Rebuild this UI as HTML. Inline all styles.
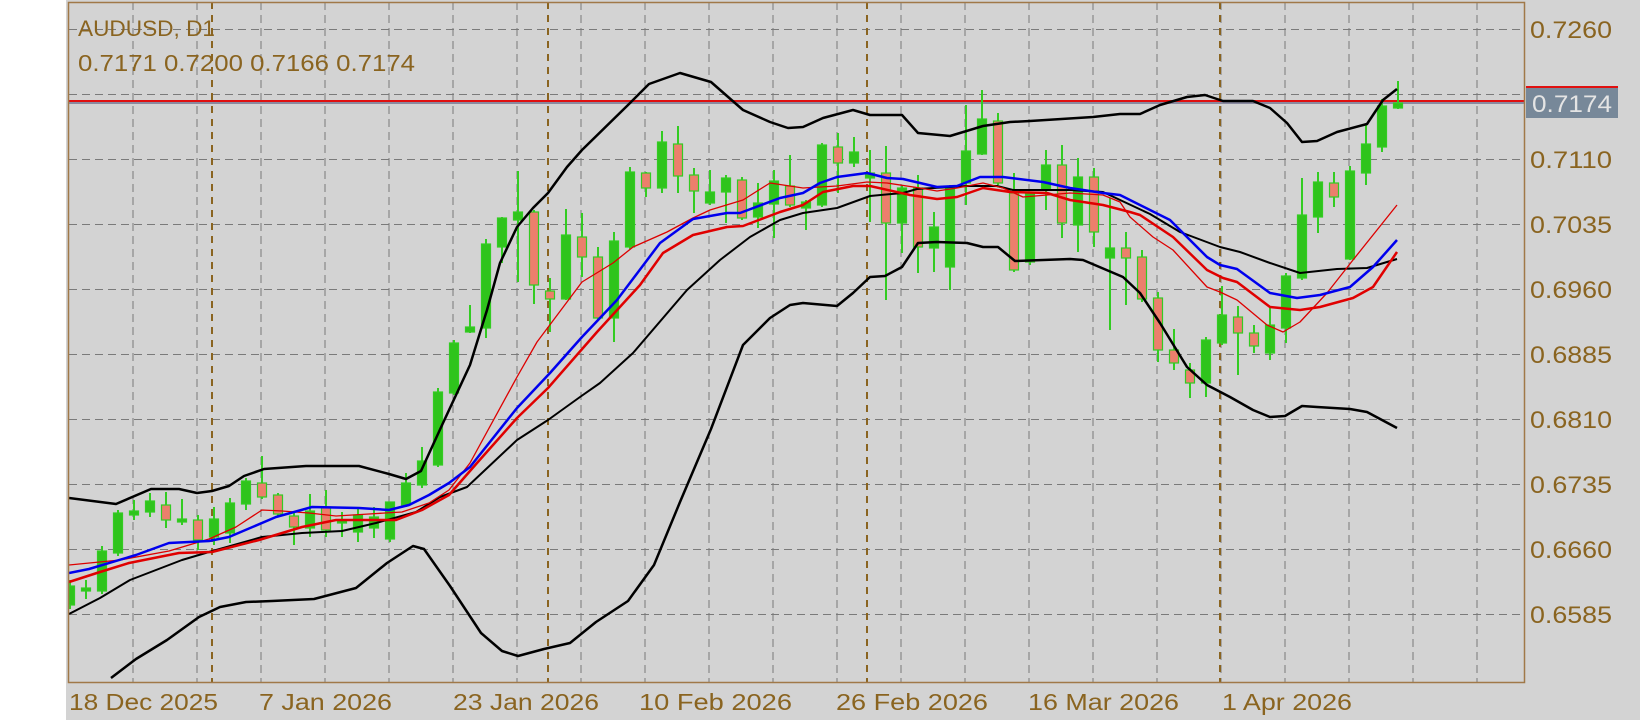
<!DOCTYPE html>
<html><head><meta charset="utf-8"><style>
html,body{margin:0;padding:0;background:#fff;width:1640px;height:720px;overflow:hidden}
svg{display:block}
text{font-family:"Liberation Sans",sans-serif;fill:#8a6420}
</style></head><body>
<svg width="1640" height="720" viewBox="0 0 1640 720" xmlns="http://www.w3.org/2000/svg">
<defs><clipPath id="c"><rect x="69" y="2" width="1455" height="680"/></clipPath></defs>
<rect x="66" y="0" width="1574" height="720" fill="#d3d3d3"/>
<rect x="0" y="0" width="66" height="682" fill="#fff"/>
<g stroke="#7a7a7a" stroke-width="1" stroke-dasharray="8,5" fill="none">
<path d="M133 2V682M197 2V682M261 2V682M325 2V682M389 2V682M453 2V682M517 2V682M581 2V682M645 2V682M709 2V682M773 2V682M837 2V682M901 2V682M965 2V682M1029 2V682M1093 2V682M1157 2V682M1221 2V682M1285 2V682M1349 2V682M1413 2V682M1477 2V682"/>
<path d="M69 29.5H1524M69 94.5H1524M69 159.5H1524M69 224.5H1524M69 289.5H1524M69 354.5H1524M69 419.5H1524M69 484.5H1524M69 549.5H1524M69 614.5H1524"/>
</g>
<g stroke="#8a6420" stroke-width="2" stroke-dasharray="7,6" fill="none">
<path d="M212 2V682M548 2V682M867 2V682M1220 2V682"/>
</g>
<line x1="69" y1="103" x2="1524" y2="103" stroke="#8a8aa0" stroke-width="2"/>
<line x1="69" y1="101" x2="1524" y2="101" stroke="#e01010" stroke-width="2"/>
<g clip-path="url(#c)">
<g id="candles" stroke="#33cc22">
</g>
</g>
<g clip-path="url(#c)" fill="none" stroke-linejoin="round">
<polyline stroke="#000" stroke-width="2.5" points="69,498 116,504 151,489 179,489 197,493 212,491 229,486 244,476 264,469 306,466 359,466 389,474 406,479 421,471 443,423 470,365 487,310 500,263 517,227 533,208 548,193 567,167 582,150 628,105 649,84 680,73 711,82 743,110 770,122 788,128 803,127 823,118 853,110 870,115 902,115 918,133 950,136 983,126 1010,122 1030,121 1093,117 1120,114 1140,114 1160,105 1187,97 1205,95 1223,101 1253,101 1270,108 1287,123 1302,142 1317,141 1337,132 1367,124 1383,100 1397,89"/>
<polyline stroke="#000" stroke-width="2.5" points="111,678 136,659 167,640 199,617 220,607 246,602 272,601 314,599 356,588 387,563 413,546 424,549 450,586 481,633 502,651 518,656 544,649 570,643 596,622 628,601 654,565 680,502 711,429 743,345 770,318 790,305 803,303 837,306 853,293 870,277 885,276 902,267 918,243 937,242 967,243 983,247 998,247 1015,261 1070,259 1083,260 1123,277 1140,293 1160,323 1187,367 1207,385 1230,397 1253,410 1270,417 1285,416 1302,406 1317,407 1350,409 1367,412 1397,428"/>
<polyline stroke="#000" stroke-width="2" points="69,614 100,598 130,580 156,570 182,560 209,552 262,537 302,533 342,531 376,523 416,512 440,497 467,487 517,440 548,420 580,397 600,383 633,353 687,290 720,260 750,237 780,220 803,213 837,208 870,196 903,193 917,189 967,186 997,186 1013,190 1070,190 1103,192 1150,214 1180,232 1220,247 1240,252 1270,263 1300,273 1337,269 1367,268 1397,259"/>
<polyline stroke="#dd0000" stroke-width="1.3" points="69,565 120,560 169,551 209,539 236,527 262,510 282,511 309,513 336,516 369,514 402,512 429,503 449,490 470,463 517,377 537,342 582,282 613,263 633,247 667,232 693,218 710,210 743,200 770,183 803,188 837,186 867,182 887,183 920,188 937,191 957,188 983,183 1003,188 1023,197 1047,195 1070,193 1103,195 1120,202 1130,217 1153,237 1173,250 1207,287 1220,292 1237,300 1267,325 1283,332 1300,322 1327,293 1353,260 1397,205"/>
<polyline stroke="#e00000" stroke-width="2.5" points="69,582 100,572 129,563 179,553 212,552 259,540 302,527 336,520 369,520 396,520 422,510 449,495 477,463 517,418 548,388 597,332 640,285 663,253 693,235 727,227 743,226 780,212 803,205 823,192 853,186 870,186 910,195 937,199 957,197 983,188 1010,192 1047,193 1070,200 1103,205 1130,212 1140,215 1173,237 1207,270 1223,278 1237,282 1270,307 1300,310 1320,307 1353,298 1373,287 1397,252"/>
<polyline stroke="#0000ee" stroke-width="2.5" points="69,573 89,569 136,555 169,543 209,541 229,537 276,517 312,507 359,508 389,510 409,505 429,495 449,483 470,467 517,408 550,373 582,337 617,300 660,243 693,219 727,213 740,213 780,198 803,193 820,183 837,177 867,173 887,178 903,179 937,187 957,186 980,177 1003,177 1043,182 1070,188 1103,193 1120,195 1170,220 1207,257 1220,265 1237,269 1270,293 1297,298 1320,295 1350,287 1373,267 1397,240"/>
</g>
<rect x="68.5" y="2.5" width="1456" height="680" fill="none" stroke="#a07848" stroke-width="1.5"/>
<text x="78" y="36" font-size="22" textLength="137" lengthAdjust="spacingAndGlyphs">AUDUSD, D1</text>
<text x="78" y="71" font-size="23" textLength="337" lengthAdjust="spacingAndGlyphs">0.7171 0.7200 0.7166 0.7174</text>
<g font-size="24">
<text x="1530" y="38" textLength="82" lengthAdjust="spacingAndGlyphs">0.7260</text>
<text x="1530" y="168" textLength="82" lengthAdjust="spacingAndGlyphs">0.7110</text>
<text x="1530" y="233" textLength="82" lengthAdjust="spacingAndGlyphs">0.7035</text>
<text x="1530" y="298" textLength="82" lengthAdjust="spacingAndGlyphs">0.6960</text>
<text x="1530" y="363" textLength="82" lengthAdjust="spacingAndGlyphs">0.6885</text>
<text x="1530" y="428" textLength="82" lengthAdjust="spacingAndGlyphs">0.6810</text>
<text x="1530" y="493" textLength="82" lengthAdjust="spacingAndGlyphs">0.6735</text>
<text x="1530" y="558" textLength="82" lengthAdjust="spacingAndGlyphs">0.6660</text>
<text x="1530" y="623" textLength="82" lengthAdjust="spacingAndGlyphs">0.6585</text>
</g>
<rect x="1526" y="87" width="92" height="31" fill="#778899"/>
<line x1="1526" y1="87" x2="1618" y2="87" stroke="#e01010" stroke-width="2"/>
<text x="1532" y="112" font-size="24" style="fill:#e4e4e4" textLength="80" lengthAdjust="spacingAndGlyphs">0.7174</text>
<g font-size="23">
<text x="69" y="710" textLength="149" lengthAdjust="spacingAndGlyphs">18 Dec 2025</text>
<text x="259" y="710" textLength="133" lengthAdjust="spacingAndGlyphs">7 Jan 2026</text>
<text x="453" y="710" textLength="146" lengthAdjust="spacingAndGlyphs">23 Jan 2026</text>
<text x="639" y="710" textLength="153" lengthAdjust="spacingAndGlyphs">10 Feb 2026</text>
<text x="836" y="710" textLength="152" lengthAdjust="spacingAndGlyphs">26 Feb 2026</text>
<text x="1028" y="710" textLength="151" lengthAdjust="spacingAndGlyphs">16 Mar 2026</text>
<text x="1222" y="710" textLength="130" lengthAdjust="spacingAndGlyphs">1 Apr 2026</text>
</g>
</svg>
<script>
(function(){
var d=[[586,605,580,609,1],[588,591,580,599,1],[551,591,546,594,1],[513,553,510,556,1],[511,515,500,520,1],[501,512,493,517,1],[505,520,492,528,0],[519,522,499,525,1],[520,540,515,550,0],[519,537,507,545,1],[503,533,498,543,1],[481,504,478,510,1],[483,497,456,499,0],[495,514,493,517,0],[516,527,513,545,0],[511,528,494,537,1],[507,530,490,537,0],[520,523,512,537,1],[515,532,507,542,1],[517,528,507,538,1],[502,539,502,542,1],[483,505,473,507,1],[461,485,447,488,1],[392,465,388,467,1],[343,393,340,395,1],[327,332,305,333,1],[244,328,239,338,1],[218,247,217,263,1],[212,220,171,282,1],[212,285,210,304,0],[291,299,278,332,0],[235,299,209,300,1],[237,257,213,277,0],[257,318,247,320,0],[241,318,232,342,1],[172,247,167,249,1],[173,188,172,197,0],[142,188,131,193,1],[144,176,126,193,0],[175,191,168,213,0],[192,203,170,205,1],[178,192,175,223,1],[180,218,177,220,0],[203,217,183,228,1],[181,204,170,238,1],[186,205,155,207,0],[202,208,200,230,1],[145,205,143,207,1],[147,163,133,193,0],[152,163,137,167,1],[173,178,150,222,1],[173,223,146,300,0],[188,223,185,253,1],[188,247,175,273,0],[227,248,212,272,1],[188,267,185,290,1],[151,183,105,205,1],[119,154,90,155,1],[121,183,113,185,0],[193,270,173,272,0],[193,262,192,265,1],[165,190,150,210,1],[165,223,145,238,0],[177,225,158,252,1],[177,232,168,247,0],[248,258,198,330,1],[248,258,232,305,0],[257,299,250,302,0],[298,350,292,362,0],[350,363,329,370,0],[370,383,363,398,0],[340,383,337,397,1],[315,343,286,345,1],[317,333,306,375,0],[333,346,325,353,0],[325,353,307,360,1],[276,328,273,343,1],[215,278,178,280,1],[182,217,172,233,1],[183,197,172,207,0],[171,259,166,260,1],[144,173,125,185,1],[106,147,99,152,1],[103,108,81,109,1]];
var g=document.getElementById('candles'),ns='http://www.w3.org/2000/svg',s='';
for(var i=0;i<d.length;i++){var x=70+16*i,c=d[i];
s+='<line x1="'+x+'" y1="'+c[2]+'" x2="'+x+'" y2="'+c[3]+'" stroke-width="2"/>';
var h=Math.max(c[1]-c[0],3);
s+='<rect x="'+(x-4.5)+'" y="'+c[0]+'" width="9" height="'+h+'" fill="'+(c[4]?'#2fc41c':'#ec7f6c')+'" stroke-width="1.2"/>';}
var tmp=document.createElementNS(ns,'g');tmp.innerHTML=s;
while(tmp.firstChild)g.appendChild(tmp.firstChild);
})();
</script>
</body></html>
